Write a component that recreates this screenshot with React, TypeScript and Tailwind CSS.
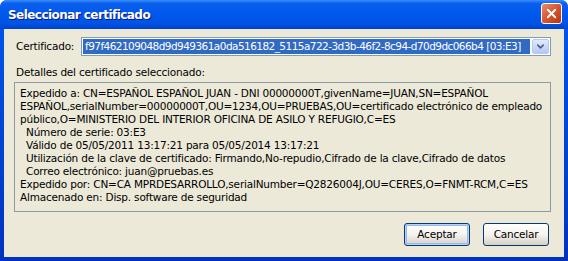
import { X, ChevronDown } from 'lucide-react';

const detailLines = [
  { text: 'Expedido a: CN=ESPAÑOL ESPAÑOL JUAN - DNI 00000000T,givenName=JUAN,SN=ESPAÑOL', indent: false },
  { text: 'ESPAÑOL,serialNumber=00000000T,OU=1234,OU=PRUEBAS,OU=certificado electrónico de empleado', indent: false },
  { text: 'público,O=MINISTERIO DEL INTERIOR OFICINA DE ASILO Y REFUGIO,C=ES', indent: false },
  { text: 'Número de serie: 03:E3', indent: true },
  { text: 'Válido de 05/05/2011 13:17:21 para 05/05/2014 13:17:21', indent: true },
  { text: 'Utilización de la clave de certificado: Firmando,No-repudio,Cifrado de la clave,Cifrado de datos', indent: true },
  { text: 'Correo electrónico: juan@pruebas.es', indent: true },
  { text: 'Expedido por: CN=CA MPRDESARROLLO,serialNumber=Q2826004J,OU=CERES,O=FNMT-RCM,C=ES', indent: false },
  { text: 'Almacenado en: Disp. software de seguridad', indent: false },
];

function XpButton({ label, focused = false }: { label: string; focused?: boolean }) {
  return (
    <button
      className={`w-[66px] h-[23px] rounded-[3px] border border-[#003C74] bg-gradient-to-b from-[#FFFFFF] via-[#F4F3EE] to-[#D6D0C5] text-[10.5px] tracking-[-0.2px] text-black ${
        focused ? 'shadow-[inset_0_0_0_1px_#B9D1FA,inset_0_0_0_2px_#98B8EA]' : ''
      }`}
    >
      {label}
    </button>
  );
}

export default function App() {
  return (
    <div className="w-[568px] h-[261px] flex flex-col bg-gradient-to-b from-[#0058EE] to-[#0032C0] rounded-t-[7px] overflow-hidden font-['DejaVu_Sans',sans-serif]">
      {/* barra de título */}
      <div className="h-[29px] shrink-0 flex items-center justify-between pl-[8px] pr-[6px] bg-[linear-gradient(to_bottom,#3B8DFF_0%,#0A5FEA_12%,#0058EE_45%,#0054E6_80%,#0042CC_100%)]">
        <span className="text-white font-bold text-[12px] tracking-[-0.55px] [text-shadow:1px_1px_0_#0A1883]">
          Seleccionar certificado
        </span>
        <div className="w-[21px] h-[21px] -mt-[2px] rounded-[3px] border border-white bg-gradient-to-br from-[#E88B6B] via-[#D9542E] to-[#B8330F] flex items-center justify-center">
          <X className="w-[15px] h-[15px] text-white" strokeWidth={3} />
        </div>
      </div>

      {/* cuerpo */}
      <div className="flex-1 mx-[4px] mb-[4px] bg-[#ECE9D8] flex flex-col pt-[8px] pl-[10px] pr-[13px] text-[10.5px] tracking-[-0.2px] text-black">
        <div className="flex items-center h-[19px]">
          <span className="w-[67px] shrink-0 pl-[2px]">Certificado:</span>
          <div className="flex-1 min-w-0 h-[19px] border border-[#7F9DB9] bg-white flex items-center p-[1px]">
            <div className="flex-1 min-w-0 h-[15px] bg-[#316AC5] text-white pl-[2px] leading-[15px] mr-[2px] whitespace-nowrap overflow-hidden tracking-[-0.55px]">
              f97f462109048d9d949361a0da516182_5115a722-3d3b-46f2-8c94-d70d9dc066b4 [03:E3]
            </div>
            <div className="w-[17px] h-[15px] shrink-0 rounded-[2px] border border-[#B9C9EF] bg-gradient-to-b from-[#E1EAFE] to-[#B4C8F6] flex items-center justify-center">
              <ChevronDown className="w-[11px] h-[11px] text-[#4D6185]" strokeWidth={3.5} />
            </div>
          </div>
        </div>

        <div className="mt-[10px] pl-[2px] leading-[13px]">Detalles del certificado seleccionado:</div>

        <div className="mt-[3px] h-[130px] border border-[#8E9AA3] px-[5px] pt-[4px] leading-[13px]">
          {detailLines.map((line) => (
            <div key={line.text} className={`whitespace-nowrap ${line.indent ? 'pl-[6px]' : ''}`}>
              {line.text}
            </div>
          ))}
        </div>

        <div className="flex justify-end gap-[13px] mt-[11px] pr-[2px]">
          <XpButton label="Aceptar" focused />
          <XpButton label="Cancelar" />
        </div>
      </div>
    </div>
  );
}
